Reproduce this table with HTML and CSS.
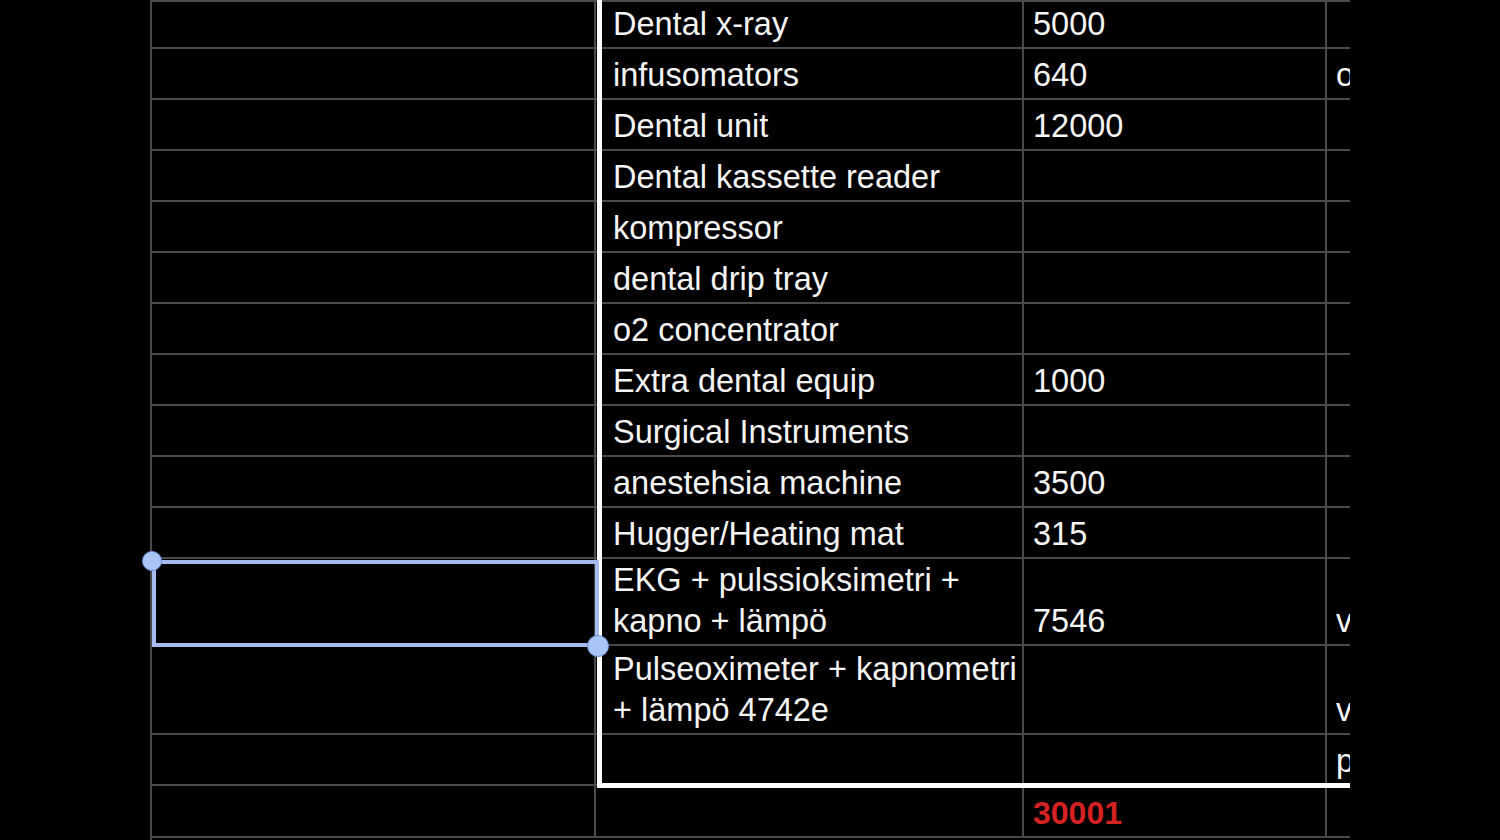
FILE: index.html
```html
<!DOCTYPE html>
<html lang="en">
<head>
    <meta charset="UTF-8">
    <meta name="viewport" content="width=device-width, initial-scale=1.0">
    <title>Equipment costs</title>
    <link rel="stylesheet" href="styles.css">
</head>
<body>

    <div class="sheet">
        <div class="grid">
            <!-- row 1 -->
            <div class="cell"></div>
            <div class="cell name">Dental x-ray</div>
            <div class="cell">5000</div>
            <div class="cell"></div>
            <!-- row 2 -->
            <div class="cell"></div>
            <div class="cell name">infusomators</div>
            <div class="cell">640</div>
            <div class="cell">o</div>
            <!-- row 3 -->
            <div class="cell"></div>
            <div class="cell name">Dental unit</div>
            <div class="cell">12000</div>
            <div class="cell"></div>
            <!-- row 4 -->
            <div class="cell"></div>
            <div class="cell name">Dental kassette reader</div>
            <div class="cell"></div>
            <div class="cell"></div>
            <!-- row 5 -->
            <div class="cell"></div>
            <div class="cell name">kompressor</div>
            <div class="cell"></div>
            <div class="cell"></div>
            <!-- row 6 -->
            <div class="cell"></div>
            <div class="cell name">dental drip tray</div>
            <div class="cell"></div>
            <div class="cell"></div>
            <!-- row 7 -->
            <div class="cell"></div>
            <div class="cell name">o2 concentrator</div>
            <div class="cell"></div>
            <div class="cell"></div>
            <!-- row 8 -->
            <div class="cell"></div>
            <div class="cell name">Extra dental equip</div>
            <div class="cell">1000</div>
            <div class="cell"></div>
            <!-- row 9 -->
            <div class="cell"></div>
            <div class="cell name">Surgical Instruments</div>
            <div class="cell"></div>
            <div class="cell"></div>
            <!-- row 10 -->
            <div class="cell"></div>
            <div class="cell name">anestehsia machine</div>
            <div class="cell">3500</div>
            <div class="cell"></div>
            <!-- row 11 -->
            <div class="cell"></div>
            <div class="cell name">Hugger/Heating mat</div>
            <div class="cell">315</div>
            <div class="cell"></div>
            <!-- row 12 -->
            <div class="cell"></div>
            <div class="cell name wrap">EKG + pulssioksimetri +<br>kapno + lämpö</div>
            <div class="cell">7546</div>
            <div class="cell">v</div>
            <!-- row 13 -->
            <div class="cell"></div>
            <div class="cell name wrap">Pulseoximeter + kapnometri<br>+ lämpö 4742e</div>
            <div class="cell"></div>
            <div class="cell">v</div>
            <!-- row 14 -->
            <div class="cell"></div>
            <div class="cell name"></div>
            <div class="cell"></div>
            <div class="cell">p</div>
            <!-- row 15 -->
            <div class="cell"></div>
            <div class="cell name"></div>
            <div class="cell total">30001</div>
            <div class="cell"></div>
        </div>

        <div class="frame"></div>

        <div class="selection">
            <span class="handle handle-start"></span>
            <span class="handle handle-end"></span>
        </div>
    </div>

</body>
</html>
```

FILE: styles.css
```css
body {
    margin: 0;
    padding: 0;
    background-color: #000;
    height: 840px;
    overflow: hidden;
    font-family: 'Liberation Sans', Arial, sans-serif;
}
.sheet {
    position: relative;
    margin-left: 150px;
    width: 1200px;
    height: 840px;
}
.grid {
    display: grid;
    grid-template-columns: 444px 428px 303px 200px;
    grid-template-rows: 47px repeat(10, 51px) 87px 89px 51px 52px 51px;
    width: 1200px;
    height: 840px;
    overflow: hidden;
    border-left: 2px solid #4a4a4a;
    border-top: 2px solid #4a4a4a;
    box-sizing: border-box;
}
.cell {
    display: flex;
    align-items: flex-end;
    box-sizing: border-box;
    border-right: 2px solid #4a4a4a;
    border-bottom: 2px solid #4a4a4a;
    padding: 0 9px 2px 9px;
    color: #f4f4f4;
    font-size: 32.5px;
    line-height: 41px;
    white-space: nowrap;
}
.name {
    padding-left: 17px;
}
.total {
    color: #d42222;
    font-weight: bold;
    font-size: 32px;
}
.frame {
    position: absolute;
    left: 447px;
    top: -10px;
    width: 753px;
    height: 798px;
    box-sizing: border-box;
    border-left: 5px solid #fff;
    border-bottom: 5px solid #fff;
}
.selection {
    position: absolute;
    left: 2px;
    top: 560px;
    width: 447px;
    height: 87px;
    box-sizing: border-box;
    border: 4px solid #a5baee;
}
.handle {
    position: absolute;
    border-radius: 50%;
    background-color: #a9c5f8;
    border: 1px solid #6f93da;
}
.handle-start {
    width: 18px;
    height: 18px;
    left: -14px;
    top: -13px;
}
.handle-end {
    width: 20px;
    height: 20px;
    right: -14px;
    bottom: -14px;
}
```
